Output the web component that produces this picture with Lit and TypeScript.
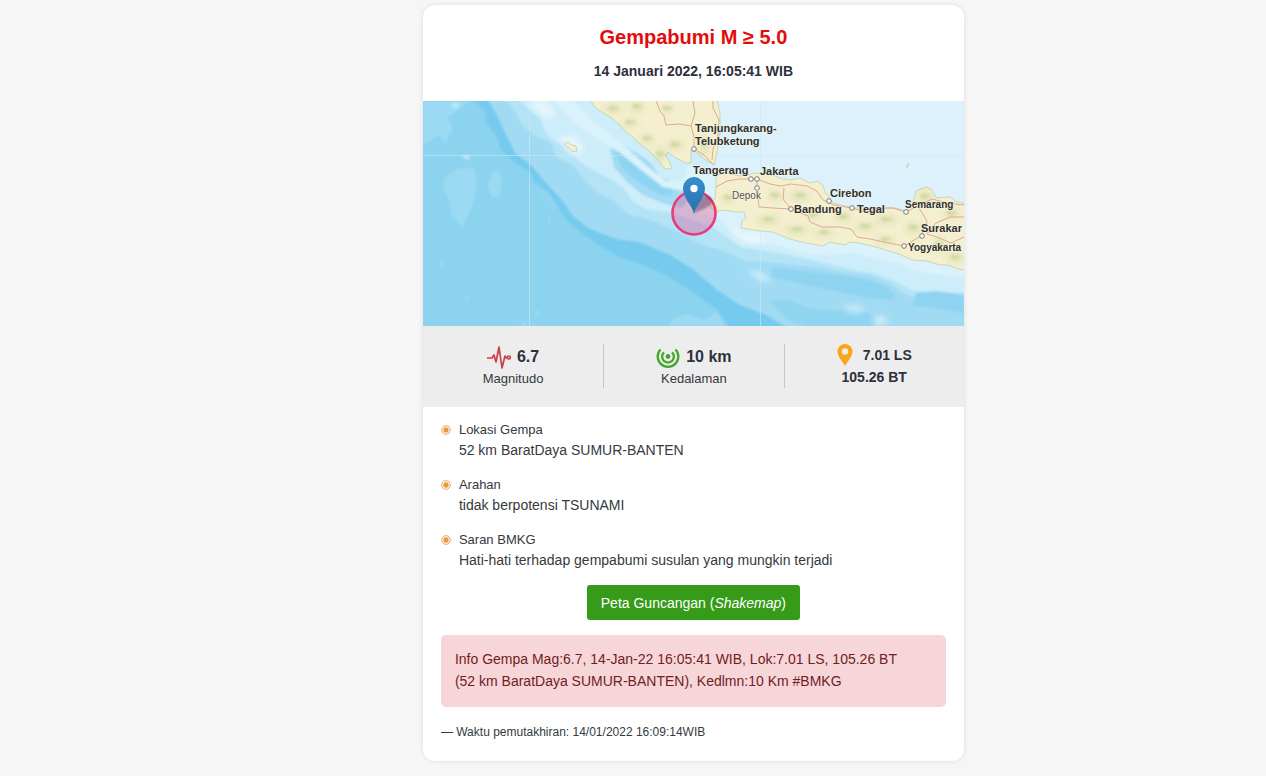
import { LitElement, html, svg, css } from "lit";
import { customElement, property } from "lit/decorators.js";

interface City {
  name: string;
  x: number;
  y: number;
  style?: string;
}

const CITIES: City[] = [
  { name: "Tanjungkarang-", x: 272, y: 31 },
  { name: "Telubketung", x: 272, y: 44 },
  { name: "Tangerang", x: 270, y: 73 },
  { name: "Jakarta", x: 337, y: 74 },
  { name: "Depok", x: 309, y: 98, style: "minor" },
  { name: "Cirebon", x: 407, y: 96 },
  { name: "Bandung", x: 371, y: 112 },
  { name: "Tegal", x: 434, y: 112 },
  { name: "Semarang", x: 482, y: 107, style: "small" },
  { name: "Surakar", x: 498, y: 131 },
  { name: "Yogyakarta", x: 485, y: 150, style: "small" },
];

const DOTS = [
  [271, 48], [328, 78], [334, 78], [334, 87], [406, 100],
  [368, 108], [429, 107], [483, 111], [499, 135], [481, 145],
];

const HILLS = [
  [190, 8, 9, 4], [207, 22, 9, 3], [224, 38, 7, 4], [237, 54, 4, 8],
  [214, 6, 7, 4], [252, 44, 9, 4], [281, 44, 5, 9], [244, 8, 5, 3],
  [305, 97, 7, 4], [352, 95, 7, 4], [377, 95, 10, 5], [345, 119, 12, 4],
  [374, 129, 12, 4], [401, 132, 10, 3], [390, 114, 7, 4], [420, 116, 8, 4],
  [442, 126, 10, 4], [463, 119, 11, 4], [462, 139, 10, 3], [502, 96, 7, 6],
  [490, 127, 8, 5], [516, 144, 4, 8], [528, 113, 8, 4], [532, 157, 9, 4],
];

@customElement("quake-map")
export class QuakeMap extends LitElement {
  static styles = css`
    :host { display: block; }
    svg { display: block; width: 100%; height: auto; }
    text { font: bold 11px "Liberation Sans", Arial, sans-serif; fill: #303030; stroke: #f8f6e5; stroke-width: 1.5px; stroke-opacity: 0.6; paint-order: stroke; }
    .small { font-size: 10px; }
    .minor { font-size: 10px; font-weight: normal; fill: #555; }
  `;

  render() {
    return html`<svg viewBox="0 0 541 225" role="img" aria-label="Peta lokasi gempa">
      <defs>
        <filter id="soft"><feGaussianBlur stdDeviation="1.2" /></filter>
        <filter id="wide"><feGaussianBlur stdDeviation="3" /></filter>
        <linearGradient id="pin" x1="0" y1="0" x2="0" y2="1">
          <stop offset="0" stop-color="#388fd0" /><stop offset="1" stop-color="#2a6fae" />
        </linearGradient>
      </defs>
      <rect width="541" height="225" fill="#8bd3ef" />
      <g filter="url(#soft)">
        <path fill="#9bdaf2" d="M0 0H47L32 11 25 16 30 28 22 43 17 33 8 40 0 44ZM22 76 36 67H51L54 82 50 103 45 114 40 126 28 114 27 101 20 86ZM69 70 75 69 79 80 76 96 69 97 65 85Z" />
        <path fill="#b8e6f6" d="M28 3 34 1 37 6 31 8ZM40 54H47V58H40Z" />
        <path fill="#9bdaf2" d="M125 115 128 116 126 126ZM18 159 21 162 18 168ZM111 208 117 211 114 216ZM250 217 265 213 281 219 294 211 302 225H246ZM175 173 178 171V176ZM42 196H46V199H42ZM98 221H103V225H98Z" />
        <path fill="#75caee" d="M50 -2 62 10 64 23 73 34 78 48 90 60 107 71 112 83 125 94 134 107 144 119 160 133 176 144 193 154 217 163 243 174 270 191 293 208 307 227H364L343 214 317 204 293 188 270 168 247 154 217 141 193 138 165 127 150 115 139 99 124 83 107 63 92 52 83 34 77 21 73 12 64 -2Z" />
        <path fill="#a0daf3" d="M64 -2 73 12 77 21 83 34 92 52 107 63 124 83 139 99 150 115 165 127 193 138 217 141 247 154 270 168 293 188 317 204 343 214 364 227H545V-2Z" />
        <path fill="#8fd5f0" d="M112 82 126 92 138 110 128 104 116 95ZM345 199 365 199 384 207 410 210 431 207 451 215 470 227H385L364 218Z" />
        <path fill="#b4e3f6" d="M80 -2 91 9 99 24 112 35 128 42 133 56 151 65 162 80 174 91 190 100 205 113 230 120 255 131 277 143 303 151 322 160 343 161 371 164 398 167 420 171 445 174 466 182 485 195 502 198H545V-2Z" />
        <path fill="#cdedfa" d="M95 -2 106 8 118 18 121 29 130 39 145 47 158 62 172 70 189 79 201 88 210 100 222 108 250 112 290 126 318 146 343 150 371 155 398 161 425 168 450 172 471 180 490 190 545 192V-2Z" />
        <path fill="#8ed4f1" d="M349 166 378 170 408 173 437 177 461 184 473 195 468 199 440 196 408 189 375 182 348 176ZM493 192 513 190 541 194V212L516 208 490 204Z" />
        <path fill="#a2dcf4" d="M187 48 201 45 216 53 229 63 237 76 249 80 260 88 265 100 258 107 239 102 220 94 204 81 191 66Z" />
        <path fill="#8ed4f1" d="M191 52 203 50 217 58 226 69 233 78 248 86 250 94 239 95 222 85 209 77 198 66Z" />
        <path fill="#d9f2fb" d="M150 -2 165 15 185 32 205 48 225 66 243 80 261 79 265 64 294 64 302 73 400 77 489 90 545 105V178L518 174 493 170 471 162 451 158 428 152 410 155 390 154 367 148 349 143 328 143 307 130 295 116 272 112 265 91 240 86 218 69 196 51 173 37 150 22 130 -2Z" />
      </g>
      <path fill="#f2fafd" opacity=".65" filter="url(#wide)" d="M104 0H125L134 14 122 18ZM136 36 151 34 161 45 158 55 146 54ZM310 126 320 133 336 130 342 140 321 142 310 134ZM323 168 337 171 349 180 339 181ZM423 204 440 206 438 212 422 210ZM450 216 461 215 465 225H451Z" />
      <path fill="#dcf1fb" d="M295 0H541V104L527 97 513 98 503 87 493 92 483 111 430 107 410 102 397 82 350 75 293 75V62Z" />
      <g stroke="#cfe9ee" stroke-width="1" opacity=".6">
        <path d="M0 54.5H541M106.5 0V225M337.5 0V225" />
      </g>
      <g fill="#f4efcf" stroke="#c6d8b5" stroke-width="1">
        <path d="M167 -1 173 7 180 12 189 17 197 24 203 31 210 36 217 43 223 47 230 54 237 61 240 66 243 68 249 67 246 60 242 54 245 51 253 57 263 62 268 62 268 49 273 51 283 59 291 64 293 56 295 45 297 32 297 12 294 -1Z" />
        <path d="M293 74 302 72 317 75 334 72 350 74 359 78 367 79 377 77 387 82 394 80 400 84 402 91 410 102 430 107 450 107 473 107 483 110 490 102 493 90 503 86 508 88 513 97 527 96 532 100 543 103V169L535 168 525 164 517 164 504 160 490 159 473 152 453 146 436 142 427 141 422 144 407 141 400 145 383 142 367 138 350 131 337 130 318 127 319 120 323 117 321 111 313 111 300 109 293 111 288 107 286 102 292 98 293 84Z" />
        <path d="M141 43 145 41 149 44 153 45 154 51 149 50 146 47ZM483 65 486 62 484 67Z" />
      </g>
      <g fill="#b9ca88" opacity=".35" filter="url(#wide)">
        ${HILLS.map(([x, y, rx, ry]) => svg`<ellipse cx=${x} cy=${y} rx=${rx} ry=${ry} />`)}
      </g>
      <g fill="#c5d092" opacity=".6" filter="url(#soft)">
        ${HILLS.map(([x, y]) => svg`<path d="M${x - 5} ${y - 1}l3-3 2 2 3-1 3 4-4-1-2 2z" />`)}
      </g>
      <g fill="none" stroke="#dfa994" stroke-width="1">
        <path d="M233 0 237 10 241 15 243 24 256 23 268 25M270 0 272 12 268 25 271 36 271 48 281 54 291 64M290 0 290 7 296 19 295 35 290 48 289 59" />
        <path d="M293 86 304 80 316 78 334 78 347 83 358 85 368 83 384 85 394 90 400 99 411 104 429 107 445 112 455 107 470 107 483 111 499 103 509 98 524 102 541 104M361 87 360 98 368 108 385 115 387 121 399 126 417 126 428 128 434 136 447 138 471 143 481 145 498 135 504 120 496 107M334 87 336 106 350 107 368 108M504 133 514 136 528 142 541 136M504 133 513 122 527 116 541 116M334 78V93" />
      </g>
      <g fill="#fff" stroke="#777" stroke-width="1">
        ${DOTS.map(([x, y]) => svg`<circle cx=${x} cy=${y} r="2.3" />`)}
      </g>
      ${CITIES.map((c) => svg`<text class=${c.style ?? ""} x=${c.x} y=${c.y}>${c.name}</text>`)}
      <circle cx="271" cy="112" r="21.5" fill="#e7347a" fill-opacity=".3" stroke="#e73b7c" stroke-width="2.6" />
      <path fill="#4a3448" opacity=".42" filter="url(#soft)" d="M271 112 273 101 281 94 288 96 289 103 281 108Z" />
      <path fill="url(#pin)" stroke="#2e7ab5" stroke-width=".8" d="M271 112C270 105 260.500 98 260.500 87A10.500 10.500 0 0 1 281.500 87C281.500 98 272 105 271 112Z" />
      <circle cx="271" cy="87.500" r="3.700" fill="#fff" />
    </svg>`;
  }
}

@customElement("quake-fact")
export class QuakeFact extends LitElement {
  @property() heading = "";
  static styles = css`
    :host { display: grid; grid-template-columns: 10px 1fr; column-gap: 8px; }
    svg { margin-top: 5px; }
    h2 { margin: 0; font-size: 13px; line-height: 20px; font-weight: normal; }
    p { grid-column: 2; margin: 0; font-size: 14px; line-height: 20px; }
  `;
  render() {
    return html`<svg width="10" height="10" viewBox="0 0 10 10" aria-hidden="true">
        <circle cx="5" cy="5" r="4.300" fill="none" stroke="#e59a40" stroke-width=".9" />
        <circle cx="5" cy="5" r="2.700" fill="#e59a40" />
      </svg>
      <h2>${this.heading}</h2>
      <p><slot></slot></p>`;
  }
}

@customElement("app-root")
export class AppRoot extends LitElement {
  static styles = css`
    :host { display: grid; grid-template-columns: 1.4fr minmax(0, 541px) 1fr; align-items: start; box-sizing: border-box; min-height: 100vh; padding: 5px 0 15px; background: #f6f6f6; color: #343a40; font-family: "Liberation Sans", Arial, sans-serif; }
    .card { grid-column: 2; background: #fff; border-radius: 12px; box-shadow: 0 0 5px rgba(0, 0, 0, 0.1); overflow: hidden; }
    header { padding: 20px 18px; text-align: center; }
    h1 { margin: 0; font-size: 20px; line-height: 24px; color: #e30b0b; }
    .time { margin: 12px 0 0; font-size: 14px; line-height: 20px; font-weight: bold; color: #2d303d; }
    .stats { display: grid; grid-template-columns: repeat(3, 1fr); padding: 18px 0 19px; background: #ededed; text-align: center; }
    .stat { height: 44px; border-left: 1px solid #c6c6c6; }
    .stat:first-child { border-left: 0; }
    .value { display: flex; align-items: center; justify-content: center; gap: 6px; height: 25px; font-size: 16px; font-weight: bold; color: #2d303d; }
    .label { font-size: 13px; line-height: 20px; }
    .place { font-size: 14px; gap: 10px; height: 22px; }
    .second { font-size: 14px; line-height: 22px; font-weight: bold; color: #2d303d; }
    .details { display: flex; flex-direction: column; gap: 15px; padding: 13px 18px 19px; }
    .map-button { align-self: center; height: 35px; padding: 0 14px; border: 0; border-radius: 3px; background: #359b18; color: #fff; font: 14px "Liberation Sans", Arial, sans-serif; cursor: pointer; }
    .notice { margin: 0; padding: 13px 14px 15px; border-radius: 5px; background: #f7d6d9; color: #721c24; font-size: 14px; line-height: 22px; }
    .notice span { display: inline-block; }
    .updated { margin: 0; font-size: 12px; line-height: 20px; }
  `;

  render() {
    return html`<main class="card">
      <header>
        <h1>Gempabumi M ≥ 5.0</h1>
        <p class="time">14 Januari 2022, 16:05:41 WIB</p>
      </header>
      <quake-map></quake-map>
      <section class="stats">
        <div class="stat">
          <div class="value">
            <svg width="24" height="24" viewBox="0 0 24 24" fill="none" stroke="#cb4048" stroke-width="1.700" stroke-linejoin="round" aria-hidden="true">
              <path d="M0 13H5L7 10 9 17 12 2 15 23 18 11 19.500 13H20.500" />
              <circle cx="21.800" cy="12.500" r="1.500" />
            </svg>6.7
          </div>
          <div class="label">Magnitudo</div>
        </div>
        <div class="stat">
          <div class="value">
            <svg width="24" height="24" viewBox="0 0 24 24" fill="none" stroke="#45a52d" stroke-width="2.300" aria-hidden="true">
              <path d="M4.500 4.500A10.300 10.300 0 1 0 19.500 4.500M8 7.300A5.900 5.900 0 1 0 16 7.300" />
              <circle cx="12" cy="11.500" r="2.400" fill="#45a52d" stroke="none" />
            </svg>10 km
          </div>
          <div class="label">Kedalaman</div>
        </div>
        <div class="stat">
          <div class="value place">
            <svg width="16" height="22" viewBox="0 0 16 22" aria-hidden="true">
              <path fill="#f9a61a" fill-rule="evenodd" d="M8 0A7.500 7.500 0 0 0 .5 7.500C.5 13 6 18 8 22 10 18 15.500 13 15.500 7.500A7.500 7.500 0 0 0 8 0ZM8 4.200A3.200 3.200 0 1 1 8 10.600 3.200 3.200 0 0 1 8 4.200Z" />
            </svg>7.01 LS
          </div>
          <div class="second">105.26 BT</div>
        </div>
      </section>
      <section class="details">
        <quake-fact heading="Lokasi Gempa">52 km BaratDaya SUMUR-BANTEN</quake-fact>
        <quake-fact heading="Arahan">tidak berpotensi TSUNAMI</quake-fact>
        <quake-fact heading="Saran BMKG">Hati-hati terhadap gempabumi susulan yang mungkin terjadi</quake-fact>
        <button class="map-button" type="button">Peta Guncangan (<em>Shakemap</em>)</button>
        <p class="notice">Info Gempa Mag:6.7, 14-Jan-22 16:05:41 WIB, Lok:7.01 LS, 105.26 BT <span>(52 km BaratDaya SUMUR-BANTEN), Kedlmn:10 Km #BMKG</span></p>
        <p class="updated">— Waktu pemutakhiran: 14/01/2022 16:09:14WIB</p>
      </section>
    </main>`;
  }
}
